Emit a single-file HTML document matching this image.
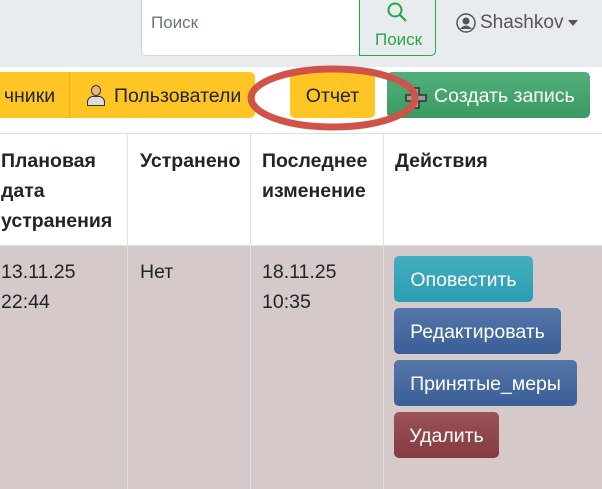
<!DOCTYPE html>
<html><head><meta charset="utf-8"><style>
*{box-sizing:border-box;margin:0;padding:0}
body{width:602px;height:489px;overflow:hidden;background:#fff;font-family:"Liberation Sans",sans-serif;font-size:19.5px;color:#212529;position:relative}
.abs{position:absolute}
.top{left:0;top:0;width:602px;height:67px;background:#e9ecef}
.btn{position:absolute;border-radius:5px;color:#fff;font-size:19.5px;line-height:1;display:flex;align-items:center;justify-content:center;white-space:nowrap;padding-top:4px}
.th{position:absolute;font-weight:bold;line-height:30px}
.td{position:absolute;line-height:30px}
.vl{position:absolute;top:134px;width:1px;height:355px;background:#dee2e6}
</style></head><body>
<div class="abs top"></div>
<div class="abs" style="left:141px;top:-5px;width:220px;height:61px;background:#fff;border:1px solid #ced4da;border-radius:5px"></div>
<div class="abs" style="left:151px;top:13px;color:#6c757d;font-size:17px">Поиск</div>
<div class="abs" style="left:359px;top:-5px;width:77px;height:61px;border:1px solid #28a745;border-radius:0 5px 5px 0;background:#e9ecef"></div>
<svg class="abs" style="left:386px;top:1px" width="22" height="22"><circle cx="9" cy="9" r="6.5" stroke="#28a745" stroke-width="2" fill="none"/><line x1="14" y1="14" x2="20" y2="20" stroke="#28a745" stroke-width="2.2"/></svg>
<div class="abs" style="left:375px;top:30px;color:#28a745;font-size:17px">Поиск</div>
<svg class="abs" style="left:456px;top:13px" width="20" height="20"><circle cx="10" cy="10" r="9" fill="none" stroke="#555" stroke-width="1.5"/><circle cx="10" cy="8" r="3.5" fill="#555"/><path d="M4 16 Q10 9 16 16" fill="#555"/></svg>
<div class="abs" style="left:480px;top:12px;color:#555;font-size:19px">Shashkov</div>
<div class="abs" style="left:568px;top:20px;border:5px solid transparent;border-top:6px solid #555"></div>
<div class="btn" style="left:-10px;top:72px;width:79px;height:46px;background:#fec525;color:#212529;border-radius:0">чники</div>
<div class="btn" style="left:69px;top:72px;width:186px;height:46px;background:#fec525;color:#212529;border-radius:0 5px 5px 0;border-left:1px solid #f0b400;justify-content:flex-start;padding-left:16px">
<span style="display:inline-block;width:20px;height:22px;margin-right:8px;position:relative;top:-2px"><span style="position:absolute;left:5px;top:1px;width:10px;height:11px;border-radius:50%;background:#e8b680;border:1px solid #333"></span><span style="position:absolute;left:1px;top:12px;width:18px;height:10px;background:#ddd;border:1px solid #333;border-radius:6px 6px 0 0"></span></span><span style="color:#212529">Пользователи</span></div>
<div class="btn" style="left:290px;top:72px;width:85px;height:46px;background:#fec525;color:#212529">Отчет</div>
<div class="btn" style="left:387px;top:72px;width:203px;height:46px;background:linear-gradient(#52b07a,#3a9a62);justify-content:flex-start;padding-left:47px">Создать запись</div>
<svg class="abs" style="left:404px;top:86px" width="24" height="24"><path d="M9 2h6v7h7v6h-7v7h-6v-7h-7v-6h7z" fill="#9a9a9a" stroke="#333" stroke-width="1.5"/></svg>
<svg class="abs" style="left:0;top:0" width="602" height="150"><ellipse cx="333" cy="98" rx="82" ry="29" fill="none" stroke="#d0534a" stroke-width="7"/></svg>
<div class="abs" style="left:0;top:133px;width:602px;height:1px;background:#dee2e6"></div>
<div class="abs" style="left:0;top:245px;width:602px;height:244px;background:#d5c9c9;border-top:1px solid #dee2e6"></div>
<div class="vl" style="left:127px"></div><div class="vl" style="left:250px"></div><div class="vl" style="left:383px"></div>
<div class="th" style="left:1px;top:146px">Плановая<br>дата<br>устранения</div>
<div class="th" style="left:140px;top:146px">Устранено</div>
<div class="th" style="left:262px;top:146px">Последнее<br>изменение</div>
<div class="th" style="left:395px;top:146px">Действия</div>
<div class="td" style="left:1px;top:257px">13.11.25<br>22:44</div>
<div class="td" style="left:140px;top:257px">Нет</div>
<div class="td" style="left:262px;top:257px">18.11.25<br>10:35</div>
<div class="btn" style="left:394px;top:256px;width:139px;height:46px;background:linear-gradient(#45adc0,#2a9db3)">Оповестить</div>
<div class="btn" style="left:394px;top:308px;width:167px;height:46px;background:linear-gradient(#5576a8,#3a5e98)">Редактировать</div>
<div class="btn" style="left:394px;top:360px;width:183px;height:46px;background:linear-gradient(#5576a8,#3a5e98)">Принятые_меры</div>
<div class="btn" style="left:394px;top:412px;width:105px;height:46px;background:linear-gradient(#9a5358,#843a40)">Удалить</div>
</body></html>
